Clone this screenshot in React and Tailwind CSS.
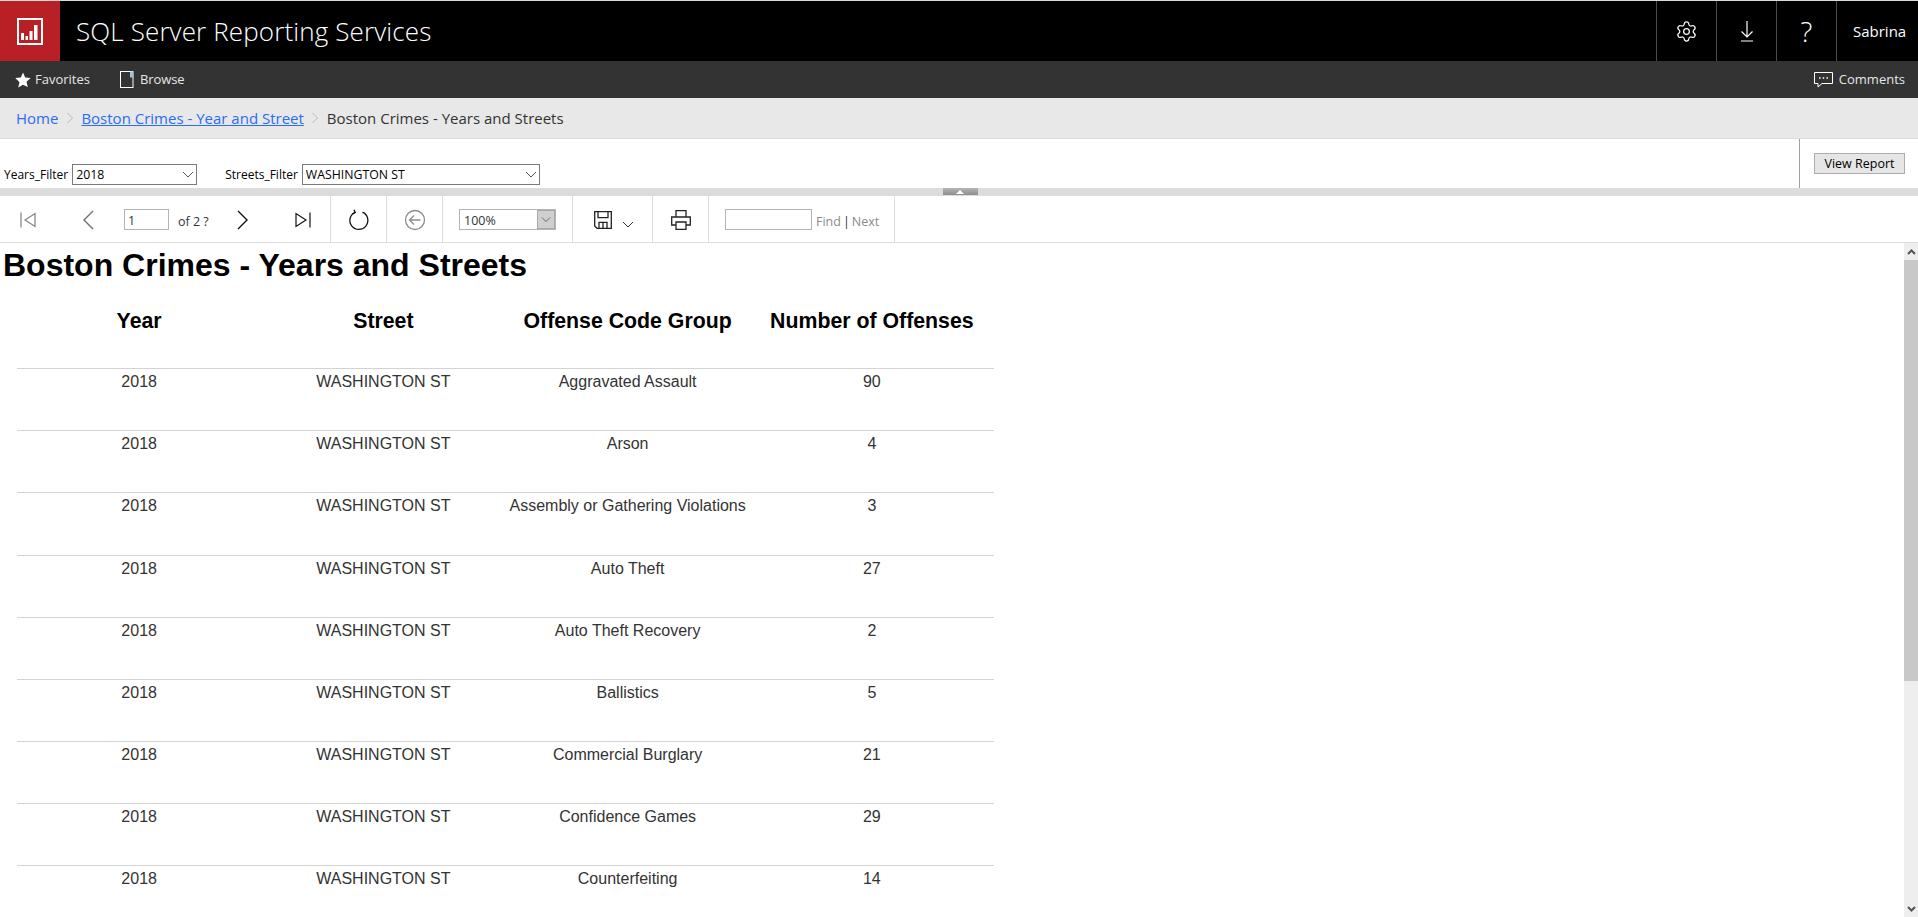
import { Settings } from 'lucide-react';

const rows = [
  ['Aggravated Assault', '90'],
  ['Arson', '4'],
  ['Assembly or Gathering Violations', '3'],
  ['Auto Theft', '27'],
  ['Auto Theft Recovery', '2'],
  ['Ballistics', '5'],
  ['Commercial Burglary', '21'],
  ['Confidence Games', '29'],
  ['Counterfeiting', '14'],
];

function Chevron({ className }) {
  return (
    <svg width="12" height="7" viewBox="0 0 12 7" fill="none" stroke="currentColor" strokeWidth="1" className={className}>
      <path d="M1 1l5 5 5-5" />
    </svg>
  );
}

function Crumb() {
  return (
    <svg width="8" height="12" viewBox="0 0 8 12" fill="none" stroke="#b9b9b9" strokeWidth="1">
      <path d="M1.5 1l5 5-5 5" />
    </svg>
  );
}

function ParamSelect({ value, width }) {
  return (
    <div className={`relative ${width} h-[21px]`}>
      <select className="w-full h-full appearance-none border border-[#7a7a7a] bg-white pl-[3px] pt-[2px] text-[12.300px] leading-none text-black outline-none">
        <option>{value}</option>
      </select>
      <Chevron className="absolute right-[3px] top-[7px] text-[#555]" />
    </div>
  );
}

export default function App() {
  return (
    <div className="w-[1918px] h-[917px] overflow-hidden flex flex-col bg-white font-['Open_Sans',sans-serif]">
      {/* black header */}
      <header className="h-[61px] shrink-0 border-t border-[#dcdcdc] bg-black flex items-stretch text-white">
        <div className="w-[60px] bg-[#b92025] flex items-center justify-center">
          <svg width="26" height="27" viewBox="0 0 26 27" fill="none">
            <rect x="1" y="1" width="24" height="25" stroke="white" strokeWidth="2" />
            <path d="M4 15h3v7H4zM8.500 18H11v4H8.500zM12.500 13h3v9h-3zM17 7h3.500v15H17z" fill="white" />
          </svg>
        </div>
        <div className="ml-[16px] flex-1 flex items-center pt-[1px] text-[26px] font-light tracking-[0.13px]">
          SQL Server Reporting Services
        </div>
        <div className="w-[60px] border-l border-[#4a4a4a] flex items-center justify-center">
          <Settings size={23} strokeWidth={1.3} />
        </div>
        <div className="w-[60px] border-l border-[#4a4a4a] flex items-center justify-center">
          <svg width="14" height="21" viewBox="0 0 14 21" fill="none" stroke="white" strokeWidth="1.2">
            <path d="M7 0v16M1.500 10.500L7 16l5.500-5.500M1 20h12" />
          </svg>
        </div>
        <div className="w-[60px] border-l border-[#4a4a4a] flex items-center justify-center text-[28px] font-light">?</div>
        <div className="flex-1 max-w-[82px] border-l border-[#4a4a4a] pl-[16px] flex items-center text-[15px]">Sabrina</div>
      </header>

      {/* dark nav */}
      <nav className="h-[37px] shrink-0 bg-[#333333] flex items-center justify-between pl-[15px] pr-[13px] text-[13px] text-[#e6e6e6]">
        <div className="flex items-center">
          <svg width="16" height="16" viewBox="0 0 16 16" fill="white">
            <path d="M8 .5l2.200 5.100 5.500.5-4.200 3.600 1.300 5.400L8 12.700l-4.800 2.900 1.300-5.400L.3 6.100l5.500-.5z" />
          </svg>
          <span className="ml-[4px]">Favorites</span>
          <svg width="14" height="17" viewBox="0 0 14 17" fill="none" className="ml-[30px]">
            <rect x="0.500" y="0.500" width="12.500" height="16" stroke="white" strokeWidth="1" />
            <rect x="10" y="0.500" width="3" height="6" fill="#9cc3e6" />
          </svg>
          <span className="ml-[6px] tracking-[-0.1px]">Browse</span>
        </div>
        <div className="flex items-center">
          <svg width="19" height="16" viewBox="0 0 19 16" fill="none" stroke="white" strokeWidth="1">
            <path d="M.5.500h18v11H8l-4 3.500v-3.500H.5z" />
            <path d="M5 6h1.500M8.700 6h1.500M12.400 6h1.500" strokeWidth="1.600" />
          </svg>
          <span className="ml-[6px]">Comments</span>
        </div>
      </nav>

      {/* breadcrumb */}
      <div className="h-[41px] shrink-0 bg-[#e8e8e8] border-b border-[#dddddd] pl-[16px] flex items-center gap-[7.500px] text-[15px] text-[#333]">
        <span className="text-[#2a6cf6]">Home</span>
        <Crumb />
        <span className="text-[#2a6cf6] underline">Boston Crimes - Year and Street</span>
        <Crumb />
        <span>Boston Crimes - Years and Streets</span>
      </div>

      {/* parameters */}
      <div className="h-[49px] shrink-0 flex">
        <div className="flex-1 flex items-start pt-[25px] pl-[4px] text-[12px] text-black">
          <label className="h-[21px] pt-[1px] flex items-center mr-[4px]">Years_Filter</label>
          <ParamSelect value="2018" width="w-[125px]" />
          <label className="h-[21px] pt-[1px] flex items-center ml-[28px] mr-[4px]">Streets_Filter</label>
          <ParamSelect value="WASHINGTON ST" width="w-[238px]" />
        </div>
        <div className="w-[119px] border-l border-[#a0a0a0] pl-[14px] pt-[14px] flex items-start">
          <button className="w-[91px] h-[21px] pt-[2px] bg-[#e6e6e6] border border-[#adadad] text-[12.500px] leading-none text-black">View Report</button>
        </div>
      </div>

      {/* splitter */}
      <div className="h-[8px] shrink-0 bg-[#dcdcdc] flex justify-center pl-[2px]">
        <div className="w-[35px] h-[7px] bg-gradient-to-b from-[#b5b5b5] to-[#8e8e8e] flex items-center justify-center">
          <div className="w-0 h-0 border-x-[4px] border-x-transparent border-b-[4px] border-b-white" />
        </div>
      </div>

      {/* toolbar */}
      <div className="h-[47px] shrink-0 border-b border-[#dcdcdc] flex items-stretch text-[12.500px] text-[#333]">
        <div className="w-[331px] border-r border-[#dcdcdc] flex items-center pt-[1px]">
          <svg width="16" height="16" viewBox="0 0 16 16" fill="none" stroke="#7f7f7f" strokeWidth="1.200" className="ml-[20px]">
            <path d="M1 .5v15M15 1.500v13L5 8z" />
          </svg>
          <svg width="12" height="20" viewBox="0 0 12 20" fill="none" stroke="#6f6f6f" strokeWidth="1.400" className="ml-[46px]">
            <path d="M11 1L2 10l9 9" />
          </svg>
          <input defaultValue="1" className="ml-[30px] w-[45px] h-[21px] border border-[#b4b4b4] pl-[3px] pt-[2px] text-[12.500px] text-[#333] outline-none" />
          <span className="ml-[9px] pt-[5px] w-[40px] whitespace-nowrap text-[12.500px]">of 2 ?</span>
          <svg width="12" height="20" viewBox="0 0 12 20" fill="none" stroke="#111" strokeWidth="1.400" className="ml-[19px]">
            <path d="M1 1l9 9-9 9" />
          </svg>
          <svg width="16" height="16" viewBox="0 0 16 16" fill="none" stroke="#111" strokeWidth="1.200" className="ml-[46px]">
            <path d="M15 .5v15M1 1.500v13L11 8z" />
          </svg>
        </div>
        <div className="w-[56px] border-r border-[#dcdcdc] flex items-center justify-center pt-[1px]">
          <svg width="22" height="22" viewBox="0 0 22 22" fill="none" stroke="#111" strokeWidth="1.300">
            <path d="M14.500 3.200A9 9 0 1 1 7 3.300" />
            <path d="M6 .8l1.200 2.700L4.500 5" />
          </svg>
        </div>
        <div className="w-[56px] border-r border-[#dcdcdc] flex items-center justify-center pt-[1px]">
          <svg width="22" height="22" viewBox="0 0 22 22" fill="none" stroke="#8c8c8c" strokeWidth="1.300">
            <circle cx="11" cy="11" r="9.500" />
            <path d="M16.500 11H5.500M10 6.500L5.500 11l4.500 4.500" />
          </svg>
        </div>
        <div className="w-[130px] border-r border-[#dcdcdc] flex items-center pl-[16px] pt-[1px]">
          <div className="w-[97px] h-[21px] border border-[#b4b4b4] flex items-center justify-between text-[12.500px] pl-[4px]">
            <span className="pt-[4px]">100%</span>
            <div className="w-[18px] h-full bg-[#cfcfcf] border border-[#a8a8a8] flex items-center justify-center">
              <Chevron className="text-[#555] w-[10px]" />
            </div>
          </div>
        </div>
        <div className="w-[80px] border-r border-[#dcdcdc] flex items-center pl-[21px] pt-[1px]">
          <svg width="18" height="18" viewBox="0 0 18 18" fill="none" stroke="#222" strokeWidth="1.300">
            <path d="M.7.700h16.600v16.600H3L.7 15z" />
            <path d="M4 .7v6h10v-6M5 17.300v-6h8v6M9 11.500v5.800" />
          </svg>
          <Chevron className="ml-[10px] mt-[10px] text-[#333]" />
        </div>
        <div className="w-[56px] border-r border-[#dcdcdc] flex items-center justify-center pt-[1px]">
          <svg width="20" height="20" viewBox="0 0 20 20" fill="none" stroke="#222" strokeWidth="1.300">
            <path d="M5 7V.7h10V7M5 15H.7V7h18.600v8H15" />
            <path d="M5 12h10v7.300H5z" />
          </svg>
        </div>
        <div className="w-[186px] border-r border-[#dcdcdc] flex items-center pl-[16px] pt-[1px]">
          <input className="w-[87px] h-[21px] border border-[#b4b4b4] outline-none" />
          <span className="ml-[4px] pt-[5px] text-[#8a8a8a]">Find</span>
          <span className="mx-[2px] pt-[5px] text-[#333]">|</span>
          <span className="pt-[5px] text-[#8a8a8a]">Next</span>
        </div>
      </div>

      {/* report */}
      <div className="flex-1 min-h-0 flex">
        <main className="flex-1 overflow-hidden font-['Liberation_Sans',Arial,sans-serif]">
          <h1 className="pl-[3px] h-[46px] pt-[4px] text-[32px] leading-[37px] font-bold text-black whitespace-nowrap">Boston Crimes - Years and Streets</h1>
          <div className="ml-[17px] w-[977px]">
            <div className="h-[79px] grid grid-cols-4 text-[21.300px] font-bold text-black text-center pt-[20px] leading-[25px]">
              <div>Year</div>
              <div>Street</div>
              <div>Offense Code Group</div>
              <div className="whitespace-nowrap">Number of Offenses</div>
            </div>
            {rows.map(([group, count]) => (
              <div key={group} className="h-[62.180px] border-t border-[#d3d3d3] grid grid-cols-4 text-[16px] leading-[18px] text-[#333] text-center pt-[4px]">
                <div>2018</div>
                <div>WASHINGTON ST</div>
                <div>{group}</div>
                <div>{count}</div>
              </div>
            ))}
          </div>
        </main>
        <div className="w-[14px] shrink-0 bg-[#eeeeee] flex flex-col">
          <div className="h-[17px] flex items-center justify-center">
            <svg width="9" height="6" viewBox="0 0 9 6" fill="none" stroke="#555" strokeWidth="2"><path d="M1 5l3.500-3.500L8 5" /></svg>
          </div>
          <div className="h-[421px] bg-[#c8c8c8]" />
          <div className="flex-1" />
          <div className="h-[17px] flex items-center justify-center">
            <svg width="9" height="6" viewBox="0 0 9 6" fill="none" stroke="#555" strokeWidth="2"><path d="M1 1l3.500 3.500L8 1" /></svg>
          </div>
        </div>
      </div>
    </div>
  );
}
